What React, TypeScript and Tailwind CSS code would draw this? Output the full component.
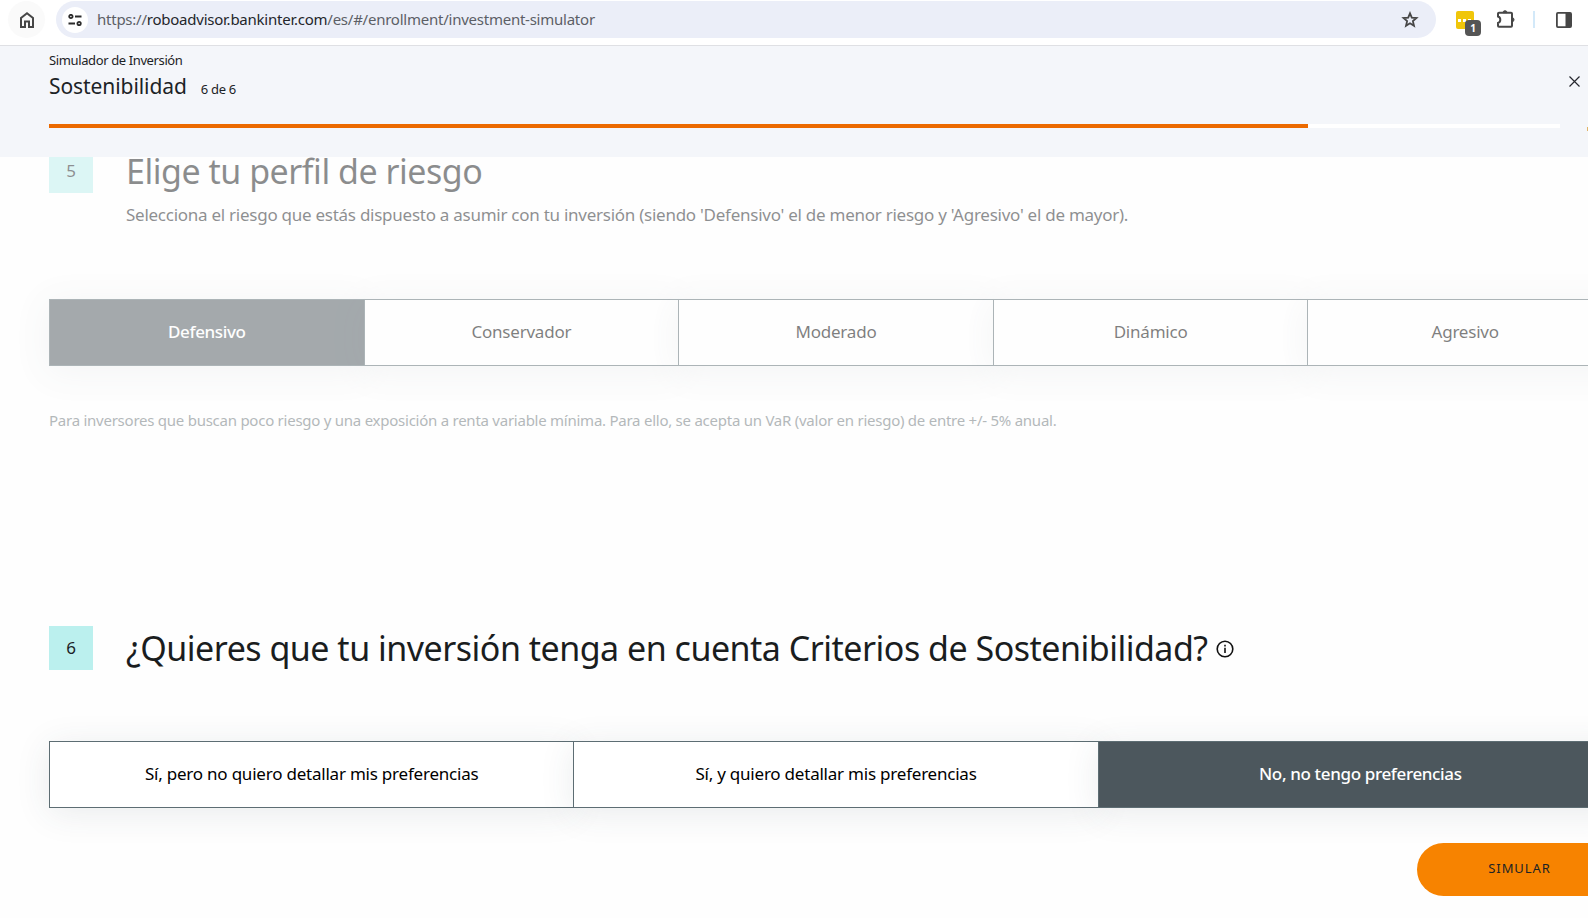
const riskProfiles = ['Defensivo', 'Conservador', 'Moderado', 'Dinámico', 'Agresivo']
const sustainability = [
  'Sí, pero no quiero detallar mis preferencias',
  'Sí, y quiero detallar mis preferencias',
  'No, no tengo preferencias',
]

export default function App() {
  return (
    <div className="h-screen overflow-hidden bg-[#fefefe] text-[#1c2326] font-['Noto_Sans',sans-serif] flex flex-col">
      <BrowserBar />
      <StepHeader />
      <main className="flex-1 min-h-0 pl-[49px]">
        {/* the page is scrolled, so step 5 starts under the header */}
        <section className="w-[1573px] opacity-50">
          <div className="flex">
            <span className="flex h-9 w-11 flex-none justify-center bg-[#bbf0ee] text-[17px] leading-7">5</span>
            <div className="ml-[33px]">
              <h2 className="text-[34px] leading-7 tracking-[-0.48px] whitespace-nowrap text-[#1a1d1e]">
                Elige tu perfil de riesgo
              </h2>
              <p className="mt-3 text-[17px] leading-9 tracking-[-0.26px] whitespace-nowrap">
                Selecciona el riesgo que estás dispuesto a asumir con tu inversión (siendo 'Defensivo' el de menor riesgo y 'Agresivo' el de mayor).
              </p>
            </div>
          </div>
          <OptionBar options={riskProfiles} selected={0} className="mt-[66px]" />
          <p className="mt-[42px] text-[15px] leading-6 tracking-[-0.25px] whitespace-nowrap text-[#6b7478]">
            Para inversores que buscan poco riesgo y una exposición a renta variable mínima. Para ello, se acepta un VaR (valor en riesgo) de entre +/- 5% anual.
          </p>
        </section>

        <section className="mt-[194px] w-[1573px]">
          <div className="flex">
            <span className="flex size-11 flex-none justify-center bg-[#bbf0ee] text-[17px] leading-[43px]">6</span>
            <h2 className="ml-[33px] text-[34px] leading-[44px] tracking-[-0.5px] whitespace-nowrap text-[#1a1d1e]">
              ¿Quieres que tu inversión tenga en cuenta Criterios de Sostenibilidad?
            </h2>
            <InfoIcon />
          </div>
          <OptionBar options={sustainability} selected={2} className="mt-[71px]" />
          <div className="mt-[35px] flex justify-end">
            <button className="h-[53px] w-[205px] rounded-full bg-[#f78300] pb-0.5 text-[13px] tracking-[0.9px]">
              SIMULAR
            </button>
          </div>
        </section>
      </main>
    </div>
  )
}

function BrowserBar() {
  return (
    <div className="flex h-[46px] flex-none items-start border-b border-[#dfe0e4] bg-white pt-px pl-2 text-[#474747]">
      <button className="flex size-[37px] items-center justify-center rounded-full bg-[#fafafa]">
        <svg width="16" height="18" viewBox="0 0 16 18" fill="none" stroke="currentColor" strokeWidth="2">
          <path d="M2 16V7l6-4.8L14 7v9h-4v-5.500H6V16z" />
        </svg>
      </button>
      <div className="ml-[11px] flex h-[37px] w-[1380px] items-center rounded-full bg-[#ebeef8] pr-[17px] pl-1.5">
        <button className="flex size-[26px] items-center justify-center rounded-full bg-white text-[#2b2b2b]">
          <svg width="14" height="12" viewBox="0 0 14 12" fill="none" stroke="currentColor" strokeWidth="1.8">
            <circle cx="2.9" cy="2.5" r="1.7" />
            <path d="M7 2.5h6.5M.5 9.5H7" />
            <circle cx="11.1" cy="9.5" r="1.7" />
          </svg>
        </button>
        <span className="ml-[9px] text-[15px] tracking-[-0.24px] text-[#5c5f66]">
          https://<span className="text-[#24262b]">roboadvisor.bankinter.com</span>/es/#/enrollment/investment-simulator
        </span>
        <svg className="ml-auto" width="18" height="18" viewBox="0 0 18 18" fill="none" stroke="currentColor" strokeWidth="1.8">
          <path d="M9 2.3l1.8 4.3 4.7.4-3.6 3.1 1.1 4.6L9 12.2l-4 2.5 1.1-4.6L2.500 7l4.700-.4z" />
        </svg>
      </div>
      <ExtensionBadge />
      <svg className="mt-2 ml-[22px]" width="20" height="20" viewBox="0 0 20 20" fill="none" stroke="currentColor" strokeWidth="2">
        <path d="M3 3.7h12a1 1 0 0 1 1 1v12a1 1 0 0 1-1 1H3a1 1 0 0 1-1-1V14c1.6-.5 2.3-1.7 2.3-3.200S3.600 8 2 7.500V4.700a1 1 0 0 1 1-1z" />
        <path d="M7 3.7a2 2 0 0 1 4 0zM16 8.7a2 2 0 0 1 0 4z" fill="currentColor" strokeWidth="1" />
      </svg>
      <span className="mt-[10px] ml-[17px] h-[17px] w-0.5 bg-[#d3e9f9]" />
      <svg className="mt-[11px] ml-[21px]" width="16" height="16" viewBox="0 0 16 16">
        <rect x="0.9" y="0.9" width="14.2" height="14.2" rx="1" fill="none" stroke="currentColor" strokeWidth="1.8" />
        <path d="M9.5 1H15v14H9.5z" fill="currentColor" />
      </svg>
    </div>
  )
}

function ExtensionBadge() {
  return (
    <div className="relative mt-[10px] ml-5 flex size-[18px] items-center gap-0.5 rounded-[2px] bg-[#f0c60a] pl-0.5">
      <span className="size-[3px] bg-white" />
      <span className="size-[3px] bg-white" />
      <span className="size-[3px] bg-white" />
      <span className="absolute top-[9px] left-[9px] flex size-4 items-center justify-center rounded bg-[#555] text-[10px] font-bold text-white">
        1
      </span>
    </div>
  )
}

function StepHeader() {
  return (
    <header className="h-[111px] flex-none overflow-hidden bg-[#f4f6fa] pl-[49px]">
      <div className="flex items-start justify-between">
        <div>
          <p className="pt-1 text-[13px] leading-5 tracking-[-0.38px]">Simulador de Inversión</p>
          <div className="flex items-baseline gap-[14px]">
            <h1 className="text-[21px] leading-8 tracking-[-0.08px]">Sostenibilidad</h1>
            <span className="text-[13px] tracking-[-0.3px]">6 de 6</span>
          </div>
        </div>
        <button className="mt-[30px] mr-2">
          <svg width="11" height="11" viewBox="0 0 11 11" fill="none" stroke="#26282e" strokeWidth="1.2">
            <path d="M.5.5l10 10M10.5.5l-10 10" />
          </svg>
        </button>
      </div>
      <div className="mt-[17px] flex items-center">
        <div className="my-[5px] h-1 w-[1511px] flex-none bg-white">
          <div className="h-1 w-[1259px] bg-[#ec6a00]" />
        </div>
        <span className="mt-1.5 ml-[27px] h-1 w-px bg-[#e0b468]" />
      </div>
    </header>
  )
}

function InfoIcon() {
  return (
    <svg className="mt-[14px] ml-2" width="18" height="18" viewBox="0 0 18 18" fill="none" stroke="#111" strokeWidth="1.6">
      <circle cx="9" cy="9" r="7.8" />
      <path d="M9 7.8V13M9 4.8v1.7" />
    </svg>
  )
}

function OptionBar({ options, selected, className }: { options: string[]; selected: number; className: string }) {
  return (
    <div className={`flex h-[67px] ${className}`}>
      {options.map((option, i) => (
        <button
          key={option}
          className={`relative -mr-px flex-1 border border-[#5d6d73] pb-0.5 text-[17px] shadow-[0_5px_35px_rgba(50,70,75,0.1)] ${
            i === selected
              ? 'bg-[#4c575d] font-medium tracking-[-0.36px] text-white'
              : 'bg-white tracking-[-0.22px] text-black'
          }`}
        >
          {option}
        </button>
      ))}
    </div>
  )
}
